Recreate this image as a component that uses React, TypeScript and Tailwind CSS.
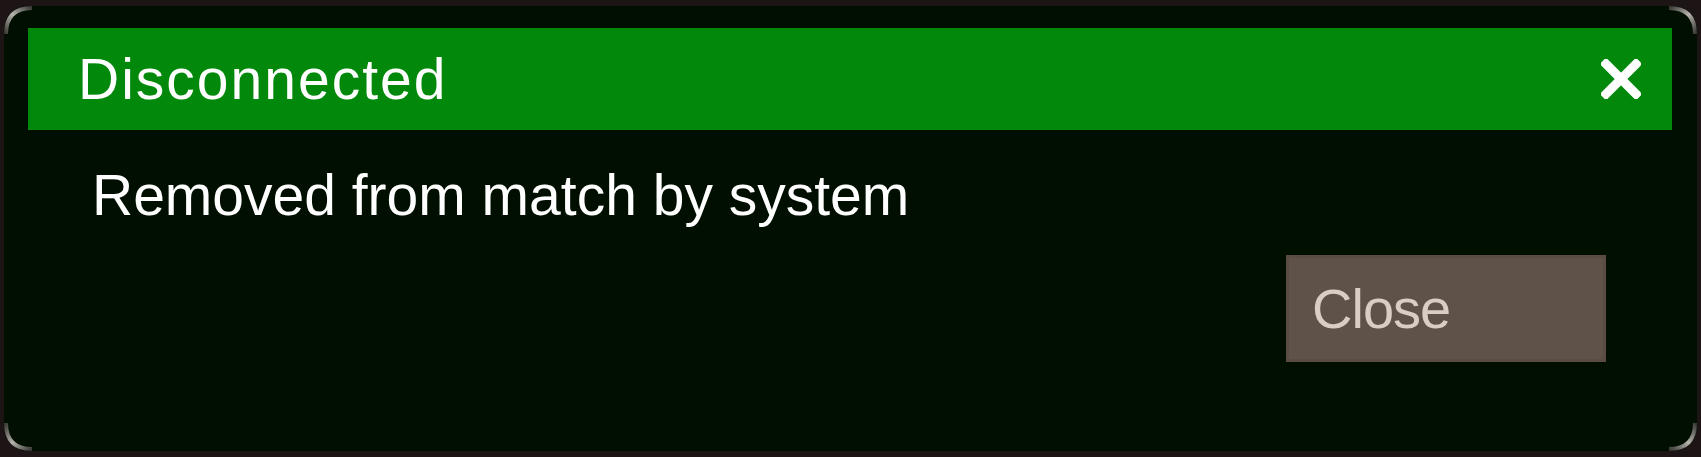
import React from "react";

function Corner({ className, rotate }: { className: string; rotate: number }) {
  return (
    <svg
      className={className}
      width="30"
      height="30"
      viewBox="0 0 30 30"
      style={{ transform: `rotate(${rotate}deg)` }}
    >
      <defs>
        <linearGradient id={`g${rotate}`} x1="0" y1="1" x2="1" y2="0">
          <stop offset="0" stopColor="#3a3a36" />
          <stop offset="0.5" stopColor="#b5b2ac" />
          <stop offset="1" stopColor="#3a3a36" />
        </linearGradient>
      </defs>
      <path
        d="M2 28 Q2 2 28 2"
        fill="none"
        stroke={`url(#g${rotate})`}
        strokeWidth="4"
      />
    </svg>
  );
}

export default function App() {
  return (
    <div
      className="w-[1701px] h-[457px] bg-[#1d1515] overflow-hidden pt-[6px] pl-[4px] pr-[4px]"
      style={{ fontFamily: '"Liberation Sans", Arial, sans-serif' }}
    >
      <div className="relative h-[445px] rounded-[24px] bg-[#000f00] flex flex-col pt-[22px] pl-[24px] pr-[25px]">
        <Corner className="absolute left-0 top-0" rotate={0} />
        <Corner className="absolute right-0 top-0" rotate={90} />
        <Corner className="absolute right-0 bottom-0" rotate={180} />
        <Corner className="absolute left-0 bottom-0" rotate={270} />

        <div className="h-[102px] bg-[#02880a] flex items-center justify-between pl-[50px] pr-[31px]">
          <span className="text-[57px] leading-none text-white tracking-[2px]">
            Disconnected
          </span>
          <svg width="40" height="40" viewBox="0 0 40 40">
            <path
              d="M5 5 L35 35 M35 5 L5 35"
              stroke="#ffffff"
              strokeWidth="9"
              strokeLinecap="square"
            />
          </svg>
        </div>

        <p className="mt-[37px] pl-[64px] text-[57px] leading-none text-white">
          Removed from match by system
        </p>

        <div className="flex justify-end mt-[31px] pr-[66px]">
          <button className="w-[320px] h-[107px] bg-[#5f5248] border-[3px] border-[#5a4c42] text-left pl-[23px] text-[56px] leading-none text-[#dacdc4] tracking-[-1px]">
            Close
          </button>
        </div>
      </div>
    </div>
  );
}
